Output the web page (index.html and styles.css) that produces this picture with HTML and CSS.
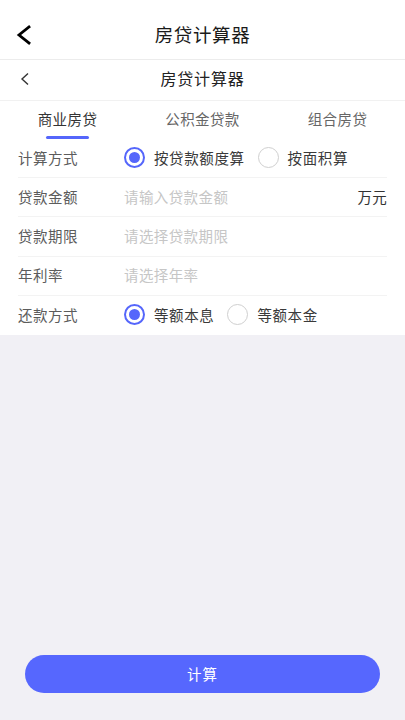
FILE: index.html
```html
<!DOCTYPE html>
<html lang="zh-CN">
<head>
<meta charset="utf-8">
<link rel="stylesheet" href="styles.css">
</head>
<body>
<div class="app">
  <header class="bar bar-main">
    <svg class="back-big" width="16" height="20" viewBox="0 0 16 20"><path d="M13 2 L3 10 L13 18" fill="none" stroke="#000" stroke-width="2.8" stroke-linecap="square" stroke-linejoin="miter"/></svg>
    <div class="bar-title">房贷计算器</div>
  </header>
  <header class="bar bar-sub">
    <svg class="back-small" width="10" height="14" viewBox="0 0 10 14"><path d="M8 1.5 L2 7 L8 12.5" fill="none" stroke="#333" stroke-width="1.4"/></svg>
    <div class="sub-title">房贷计算器</div>
  </header>
  <nav class="tabs">
    <div class="tab active">商业房贷</div>
    <div class="tab">公积金贷款</div>
    <div class="tab">组合房贷</div>
  </nav>
  <section class="form">
    <div class="row">
      <div class="label">计算方式</div>
      <div class="options">
        <span class="radio on"></span><span class="opt">按贷款额度算</span>
        <span class="radio"></span><span class="opt">按面积算</span>
      </div>
    </div>
    <div class="row">
      <div class="label">贷款金额</div>
      <div class="ph">请输入贷款金额</div>
      <div class="unit">万元</div>
    </div>
    <div class="row">
      <div class="label">贷款期限</div>
      <div class="ph">请选择贷款期限</div>
    </div>
    <div class="row">
      <div class="label">年利率</div>
      <div class="ph">请选择年率</div>
    </div>
    <div class="row last">
      <div class="label">还款方式</div>
      <div class="options">
        <span class="radio on"></span><span class="opt">等额本息</span>
        <span class="radio"></span><span class="opt">等额本金</span>
      </div>
    </div>
  </section>
  <div class="spacer"></div>
  <div class="footer">
    <button class="calc">计算</button>
  </div>
</div>
</body>
</html>
```
FILE: styles.css
```css
* { box-sizing: border-box; }
html, body { margin: 0; padding: 0; }
body {
  font-family: "Noto Sans CJK SC", "Noto Sans", sans-serif;
  background: #f1f0f5;
  width: 405px;
  height: 720px;
  overflow: hidden;
}
.app {
  display: flex;
  flex-direction: column;
  height: 720px;
}
.bar {
  position: relative;
  display: flex;
  align-items: center;
  justify-content: center;
  background: #fff;
}
.bar-main {
  height: 60px;
  border-bottom: 1px solid #ececec;
}
.back-big {
  position: absolute;
  left: 16px;
  top: 25px;
}
.bar-title {
  font-size: 18.5px;
  color: #1a1a1a;
  padding-top: 8px;
  letter-spacing: 0.6px;
}
.bar-sub {
  height: 41px;
  border-bottom: 1px solid #f1f1f1;
}
.back-small {
  position: absolute;
  left: 20px;
  top: 12px;
}
.sub-title {
  font-size: 16px;
  color: #222;
  letter-spacing: 0.8px;
  margin-top: -4px;
}
.tabs {
  display: flex;
  background: #fff;
  height: 38px;
}
.tab {
  flex: 1;
  display: flex;
  justify-content: center;
  align-items: center;
  font-size: 14.5px;
  color: #666;
  letter-spacing: 0.4px;
  position: relative;
  padding-bottom: 4px;
}
.tab.active { color: #333; }
.tab.active::after {
  content: "";
  position: absolute;
  bottom: 0;
  left: 46px;
  width: 43px;
  height: 3px;
  border-radius: 2px;
  background: #5566fb;
}
.form {
  background: #fff;
  padding: 0 18px;
}
.row {
  height: 39.2px;
  display: flex;
  align-items: center;
  border-bottom: 1px solid #f3f3f3;
  font-size: 14.5px;
  padding-bottom: 2px;
}
.row.last { border-bottom: none; }
.label {
  width: 106px;
  color: #5c5c5c;
  letter-spacing: 0.5px;
}
.ph {
  flex: 1;
  color: #c6c6c6;
  letter-spacing: 0.4px;
}
.unit {
  color: #333;
  letter-spacing: 0.3px;
}
.options {
  display: flex;
  align-items: center;
}
.radio {
  width: 21px;
  height: 21px;
  border-radius: 50%;
  border: 1.5px solid #cfcfcf;
  display: inline-flex;
  align-items: center;
  justify-content: center;
  margin-right: 9px;
}
.radio.on {
  border: 2px solid #5566fb;
}
.radio.on::after {
  content: "";
  width: 11px;
  height: 11px;
  border-radius: 50%;
  background: #5566fb;
}
.opt {
  color: #3a3a3a;
  margin-right: 13px;
  letter-spacing: 0.6px;
}
.spacer { flex: 1; }
.footer {
  padding: 0 25px 27px 25px;
}
.calc {
  display: block;
  width: 100%;
  height: 38px;
  border: none;
  border-radius: 19px;
  background: #5667fe;
  color: #fff;
  font-family: "Noto Sans CJK SC", sans-serif;
  font-size: 14.5px;
  letter-spacing: 1px;
  padding-bottom: 3px;
}
```
